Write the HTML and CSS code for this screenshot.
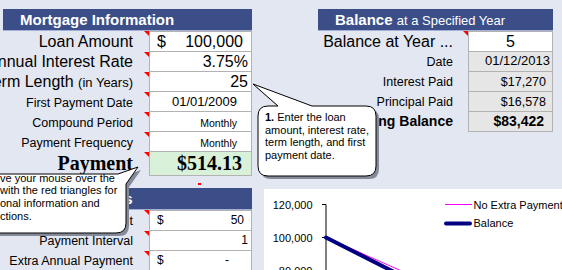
FILE: index.html
```html
<!DOCTYPE html>
<html>
<head>
<meta charset="utf-8">
<link rel="stylesheet" href="styles.css">
</head>
<body>
<div class="sheet">
  <div class="top">
    <section class="panel mort">
      <div class="hdr">Mortgage Information</div>
      <div class="rows">
        <div class="row big"><div class="lbl note"><span>Loan Amount</span></div><div class="val acct"><span>$</span><span>100,000</span></div></div>
        <div class="row big"><div class="lbl note"><span>Annual Interest Rate</span></div><div class="val pr4">3.75%</div></div>
        <div class="row big"><div class="lbl note"><span>Term Length <small>(in Years)</small></span></div><div class="val pr4">25</div></div>
        <div class="row"><div class="lbl note"><span>First Payment Date</span></div><div class="val date">01/01/2009</div></div>
        <div class="row"><div class="lbl note"><span>Compound Period</span></div><div class="val mon">Monthly</div></div>
        <div class="row"><div class="lbl note"><span>Payment Frequency</span></div><div class="val mon">Monthly</div></div>
        <div class="row pay"><div class="lbl note"><span>Payment</span></div><div class="val green">$514.13</div></div>
      </div>
    </section>
    <section class="panel bal">
      <div class="hdr">Balance <span class="sub">at a Specified Year</span></div>
      <div class="rows">
        <div class="row big"><div class="lbl note"><span>Balance at Year ...</span></div><div class="val center">5</div></div>
        <div class="row"><div class="lbl"><span>Date</span></div><div class="val gray date2">01/12/2013</div></div>
        <div class="row"><div class="lbl"><span>Interest Paid</span></div><div class="val gray money">$17,270</div></div>
        <div class="row"><div class="lbl"><span>Principal Paid</span></div><div class="val gray money">$16,578</div></div>
        <div class="row strong"><div class="lbl"><span>Ending Balance</span></div><div class="val gray money">$83,422</div></div>
      </div>
    </section>
  </div>
  <div class="spacer"><span class="dot"></span></div>
  <div class="bottom">
    <section class="panel extra">
      <div class="hdr">Extra Payments</div>
      <div class="rows">
        <div class="row"><div class="lbl note"><span>Extra Payment</span></div><div class="val acct small"><span>$</span><span>50</span></div></div>
        <div class="row"><div class="lbl note"><span>Payment Interval</span></div><div class="val small pr3">1</div></div>
        <div class="row"><div class="lbl note"><span>Extra Annual Payment</span></div><div class="val acct small dash"><span>$</span><span>-</span></div></div>
      </div>
    </section>
    <div class="chart">
      <svg width="298" height="81" viewBox="0 0 298 81">
        <g font-family="Liberation Sans, Arial, sans-serif" font-size="11" fill="#000">
          <text x="48.5" y="20" text-anchor="end">120,000</text>
          <text x="48.5" y="53" text-anchor="end">100,000</text>
          <text x="48.5" y="86" text-anchor="end">80,000</text>
          <text x="209.5" y="19.5">No Extra Payment</text>
          <text x="209.5" y="38">Balance</text>
        </g>
        <line x1="62" y1="15.5" x2="62" y2="81" stroke="#000" stroke-width="1"/>
        <line x1="58" y1="15.5" x2="62" y2="15.5" stroke="#000" stroke-width="1"/>
        <line x1="58" y1="48.5" x2="62" y2="48.5" stroke="#000" stroke-width="1"/>
        <line x1="181" y1="15.5" x2="208" y2="15.5" stroke="#FF00FF" stroke-width="1"/>
        <line x1="182" y1="34.5" x2="206" y2="34.5" stroke="#000080" stroke-width="4" stroke-linecap="round"/>
        <line x1="62" y1="48.5" x2="150" y2="87.5" stroke="#FF00FF" stroke-width="1"/>
        <line x1="62" y1="48.5" x2="140" y2="88" stroke="#000080" stroke-width="4" stroke-linecap="round"/>
      </svg>
    </div>
  </div>

  <div class="callout c1">
    <svg class="shape" width="140" height="104" viewBox="0 0 140 104">
      <path transform="translate(3,3)" fill="#858a98" d="M18,26 L28,26 L3,4 L62,26 L116,26 Q126,26 126,36 L126,86 Q126,96 116,96 L18,96 Q8,96 8,86 L8,36 Q8,26 18,26 Z"/>
      <path fill="#fff" stroke="#000" stroke-width="1" d="M18,26 L28,26 L3,4 L62,26 L116,26 Q126,26 126,36 L126,86 Q126,96 116,96 L18,96 Q8,96 8,86 L8,36 Q8,26 18,26 Z"/>
    </svg>
    <div class="ctext"><b>1.</b> Enter the loan<br>amount, interest rate,<br>term length, and first<br>payment date.</div>
  </div>

  <div class="callout c2">
    <svg class="shape" width="220" height="80" viewBox="0 0 220 80">
      <path transform="translate(3,3)" fill="#858a98" d="M20,14 L188,14 L208,7 L196,24 L196,63 Q196,73 186,73 L20,73 Q10,73 10,63 L10,24 Q10,14 20,14 Z"/>
      <path fill="#fff" stroke="#000" stroke-width="1" d="M20,14 L188,14 L208,7 L196,24 L196,63 Q196,73 186,73 L20,73 Q10,73 10,63 L10,24 Q10,14 20,14 Z"/>
    </svg>
    <div class="ctext">ve your mouse over the<br>with the red triangles for<br>onal information and<br>ctions.</div>
  </div>
</div>
</body>
</html>
```

FILE: styles.css
```css
* { box-sizing: border-box; }

body {
  margin: 0;
  background: #E3E7F1;
  font-family: "Liberation Sans", Arial, sans-serif;
  color: #000;
  width: 562px;
  height: 270px;
  overflow: hidden;
}

.sheet {
  position: relative;
  height: 270px;
  padding: 9px 0 0 3px;
  overflow: hidden;
}

.top {
  display: flex;
  gap: 66px;
  align-items: flex-start;
}

.mort, .extra { width: 249px; flex: none; }
.bal { width: 235px; flex: none; }

.hdr {
  height: 22px;
  background: #3C4E88;
  border-bottom: 1px solid #A3B0D6;
  color: #fff;
  font-weight: bold;
  font-size: 15px;
  line-height: 21px;
  padding-left: 17px;
  white-space: nowrap;
}

.hdr .sub {
  font-weight: normal;
  font-size: 13px;
}

.row {
  display: grid;
  grid-template-columns: 146px 103px;
  height: 20px;
}

.bal .row { grid-template-columns: 150px 85px; }

.row:first-child { height: 21px; }

.lbl {
  position: relative;
  display: flex;
  justify-content: flex-end;
  align-items: flex-end;
  padding: 0 16px 2px 0;
  white-space: nowrap;
  font-size: 12.5px;
  line-height: 1.15;
}

.bal .lbl { padding-right: 15px; padding-bottom: 3px; }
.extra .lbl { padding-bottom: 3px; }

.lbl small { font-size: 13px; }

.note::after {
  content: "";
  position: absolute;
  right: 0;
  top: 0;
  width: 5px;
  height: 5px;
  background: #FF0000;
  clip-path: polygon(0 0, 100% 0, 100% 100%);
}

.val {
  display: flex;
  align-items: flex-end;
  justify-content: flex-end;
  border: 1px solid #B2B2B2;
  border-top: 0;
  background: #fff;
  font-size: 12.5px;
  line-height: 1.15;
  padding: 0 6px 1px 6px;
  white-space: nowrap;
}

.row:first-child .val { border-top: 1px solid #B2B2B2; }

.big .lbl, .big .val { font-size: 16px; }
.big .lbl { padding-bottom: 1px; }
.big .val { padding-bottom: 0; }

.acct { justify-content: space-between; padding-left: 7px; padding-right: 8px; }
.pr4 { padding-right: 3px; }
.pr3 { padding-right: 3px; }

.date { font-size: 13px; padding-right: 14px; }
.mon { font-size: 10.5px; padding-right: 14px; padding-bottom: 2px; }

.pay .lbl span, .pay .val {
  font-family: "Liberation Serif", "Times New Roman", serif;
  font-weight: bold;
  font-size: 20px;
}
.pay .lbl { padding-bottom: 1px; }
.pay .val { padding-bottom: 0; padding-right: 9px; }

.green { background: #D8F1D8; }
.gray { background: #E6E6E6; }

.center { justify-content: center; padding: 0; }
.date2 { font-size: 13px; padding-right: 2px; padding-bottom: 2px; }
.money { padding-right: 6px; padding-bottom: 2px; }

.strong .lbl, .strong .val { font-weight: bold; font-size: 14px; }
.strong .val { padding-right: 8px; }

.small { font-size: 12px; padding-bottom: 2px; }
.extra .acct { padding-right: 7px; }
.extra .dash { padding-right: 22px; }

.spacer {
  position: relative;
  height: 16px;
}

.dot {
  position: absolute;
  left: 195px;
  top: 11px;
  width: 3px;
  height: 2px;
  background: #FF0000;
}

.bottom {
  display: flex;
  gap: 12px;
  align-items: flex-start;
}

.chart {
  flex: none;
  width: 298px;
  height: 81px;
  margin-top: 1px;
  background: #fff;
}

.chart svg { display: block; }

.callout {
  position: absolute;
}

.callout .shape {
  position: absolute;
  left: 0;
  top: 0;
}

.ctext {
  position: relative;
  font-size: 11px;
  line-height: 12.7px;
  white-space: nowrap;
}

.c1 {
  left: 250px;
  top: 80px;
  width: 140px;
  height: 104px;
}

.c1 .ctext { padding: 31px 0 0 15px; }

.c2 {
  left: -70px;
  top: 160px;
  width: 220px;
  height: 80px;
}

.c2 .ctext { padding: 11.5px 0 0 70px; }
```
